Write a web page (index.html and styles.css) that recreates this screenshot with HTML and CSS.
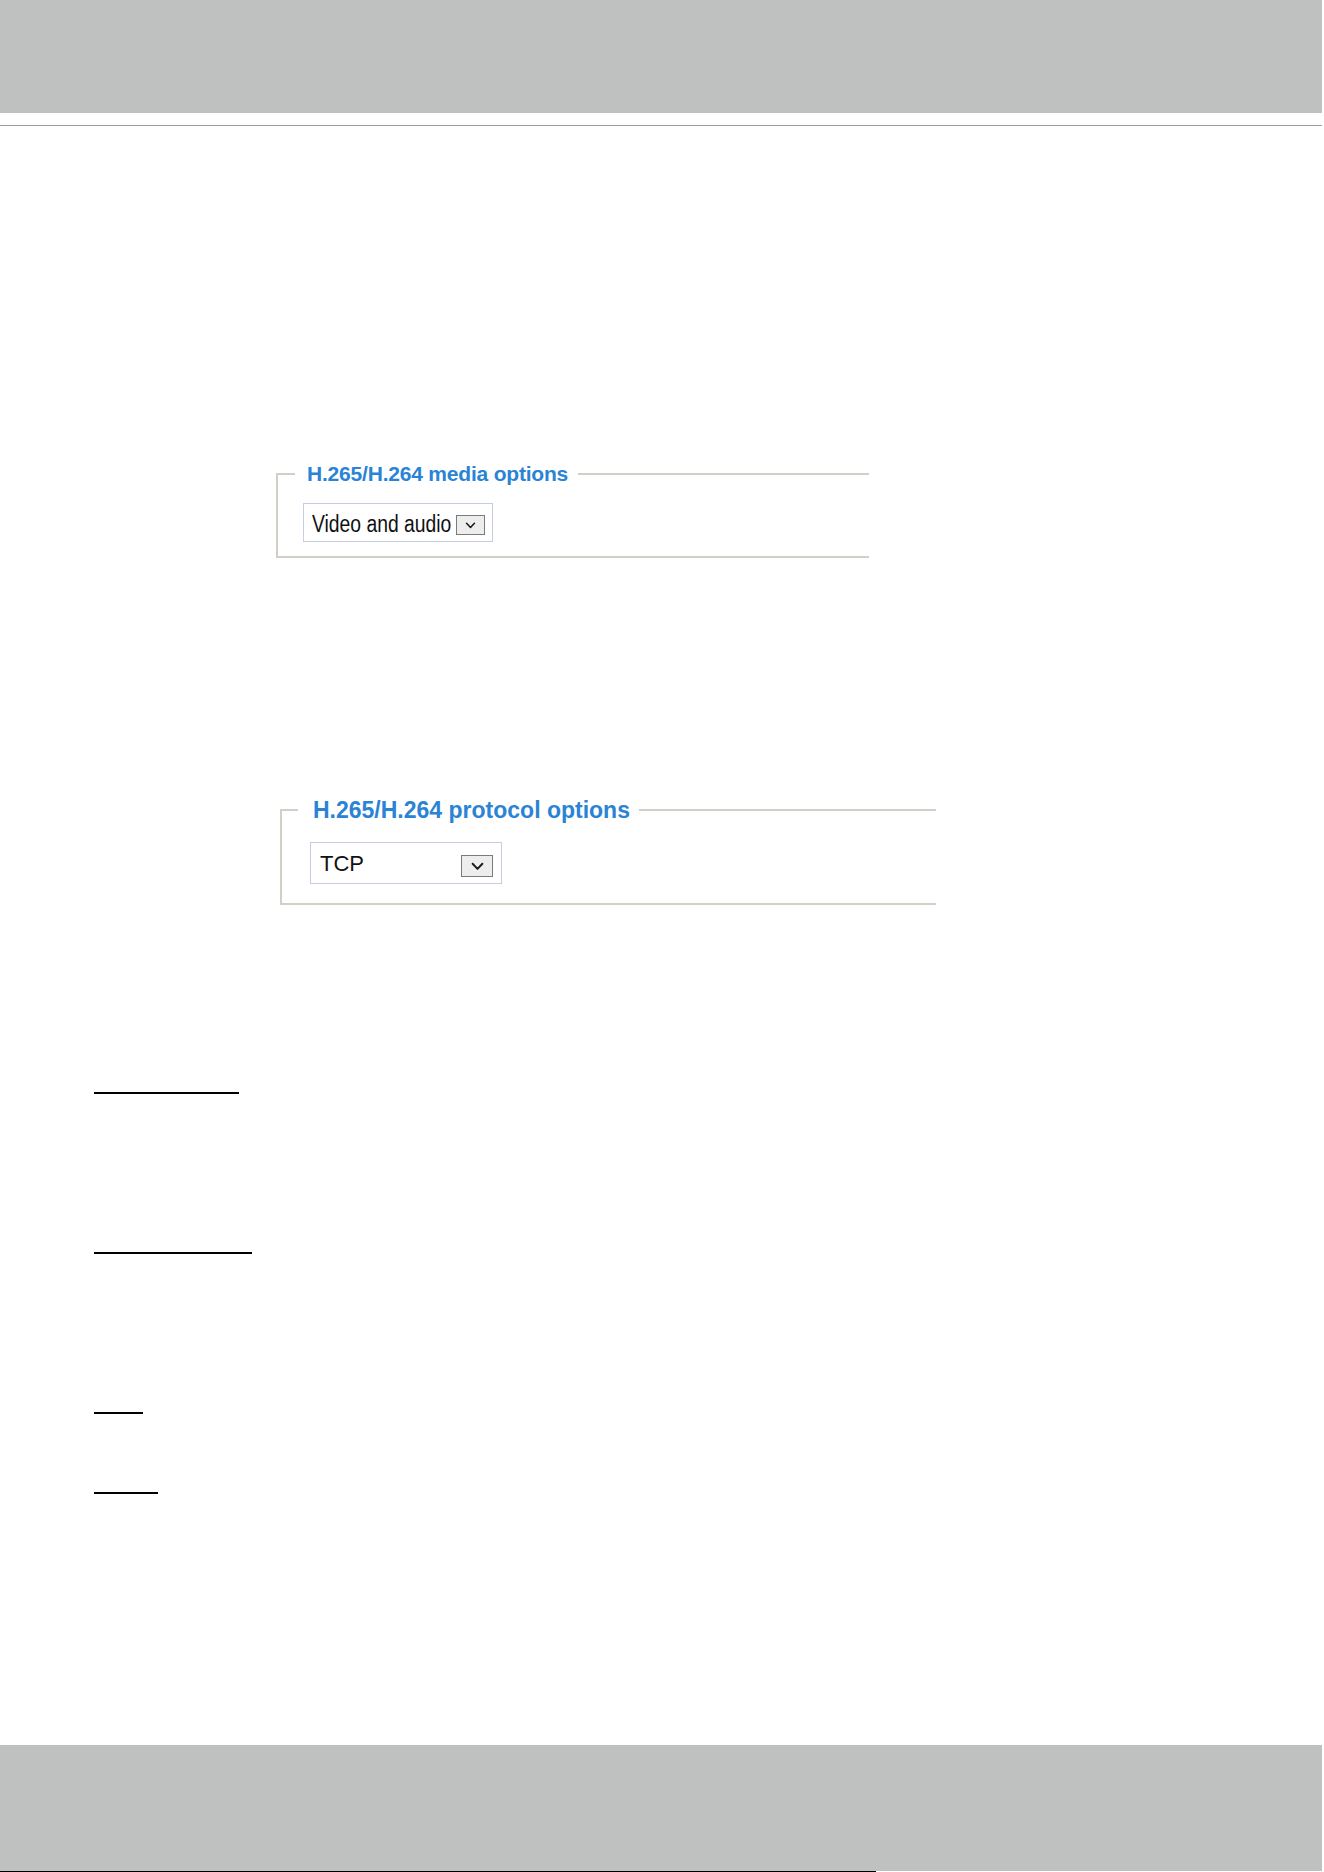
FILE: index.html
```html
<!DOCTYPE html>
<html lang="en">
<head>
<meta charset="utf-8">
<title>H.265/H.264 options</title>
<link rel="stylesheet" href="styles.css">
</head>
<body>
<div class="page">
  <header class="top-band"></header>
  <div class="top-rule"></div>
  <main class="content">
    <fieldset class="group group-media">
      <legend class="group-title">H.265/H.264 media options</legend>
      <div class="select select-media">
        <span class="select-value">Video and audio</span>
        <span class="select-arrow"><svg class="chev chev-sm" viewBox="0 0 12 8" aria-hidden="true"><polyline points="1.5,1.5 6,6.2 10.5,1.5"/></svg></span>
      </div>
    </fieldset>
    <fieldset class="group group-protocol">
      <legend class="group-title">H.265/H.264 protocol options</legend>
      <div class="select select-protocol">
        <span class="select-value">TCP</span>
        <span class="select-arrow"><svg class="chev chev-lg" viewBox="0 0 12 8" aria-hidden="true"><polyline points="1.5,1.5 6,6.2 10.5,1.5"/></svg></span>
      </div>
    </fieldset>
    <div class="marks">
      <span class="mark mark-1"></span>
      <span class="mark mark-2"></span>
      <span class="mark mark-3"></span>
      <span class="mark mark-4"></span>
    </div>
  </main>
  <footer class="bottom-band"></footer>
  <div class="bottom-rule"></div>
</div>
</body>
</html>
```
FILE: styles.css
```css
html, body {
  margin: 0;
  padding: 0;
  background: #ffffff;
}

body {
  font-family: "Liberation Sans", Arial, sans-serif;
  color: #111111;
}

.page {
  min-height: 1872px;
  display: flex;
  flex-direction: column;
}

.top-band {
  height: 113px;
  margin-right: 2px;
  background: #bfc1c0;
}

.top-rule {
  height: 1px;
  margin: 12px 2px 0 0;
  background: #9c9c9c;
}

.content {
  display: flex;
  flex-direction: column;
  align-items: flex-start;
}

.group {
  box-sizing: border-box;
  min-width: 0;
  margin: 0;
  border: 2px solid #d3cfc7;
  border-right: none;
}

.group-title {
  font-weight: bold;
  color: #2a83d5;
}

.group-media {
  width: 593px;
  margin: 336px 0 0 276px;
  padding: 17px 0 14px 17px;
}

.group-media .group-title {
  padding: 0 10px 0 12px;
  font-size: 21px;
  line-height: 24px;
  letter-spacing: -0.2px;
}

.group-protocol {
  width: 656px;
  margin: 239px 0 0 280px;
  padding: 19px 0 19px 16px;
}

.group-protocol .group-title {
  padding: 0 9px 0 15px;
  font-size: 23px;
  line-height: 26px;
}

.select {
  box-sizing: border-box;
  display: flex;
  justify-content: space-between;
  align-items: flex-start;
  border: 1px solid #c5cde0;
  background: #ffffff;
  color: #111111;
}

.select-value {
  white-space: nowrap;
}

.select-media {
  width: 190px;
  height: 39px;
  margin-left: 8px;
  padding: 0 7px 0 8px;
}

.select-media .select-value {
  display: inline-block;
  width: 140px;
  margin-top: 7px;
  font-size: 23px;
  line-height: 26px;
  transform: scaleX(0.84);
  transform-origin: left center;
}

.select-media .select-arrow {
  width: 29px;
  height: 20px;
  margin-top: 11px;
}

.select-protocol {
  width: 192px;
  height: 42px;
  margin-left: 12px;
  padding: 0 8px 0 9px;
}

.select-protocol .select-value {
  margin-top: 8px;
  font-size: 22px;
  line-height: 26px;
}

.select-protocol .select-arrow {
  width: 32px;
  height: 22px;
  margin-top: 12px;
}

.select-arrow {
  box-sizing: border-box;
  flex-shrink: 0;
  display: flex;
  align-items: center;
  justify-content: center;
  border: 1px solid #7b7b7b;
  background: #ededed;
}

.chev {
  fill: none;
  stroke: #1a1a1a;
  stroke-width: 1.8;
  stroke-linecap: round;
  stroke-linejoin: round;
}

.chev-sm {
  width: 11px;
  height: 7px;
}

.chev-lg {
  width: 13px;
  height: 9px;
}

.marks {
  display: flex;
  flex-direction: column;
  align-items: flex-start;
  margin: 187px 0 0 94px;
}

.mark {
  display: block;
  height: 2px;
  background: #000000;
}

.mark-1 { width: 145px; }
.mark-2 { width: 158px; margin-top: 158px; }
.mark-3 { width: 49px; margin-top: 158px; }
.mark-4 { width: 64px; margin-top: 78px; }

.bottom-band {
  height: 126px;
  margin: auto 2px 0 0;
  background: #bfc1c0;
}

.bottom-rule {
  width: 876px;
  height: 1px;
  background: #000000;
}
```
